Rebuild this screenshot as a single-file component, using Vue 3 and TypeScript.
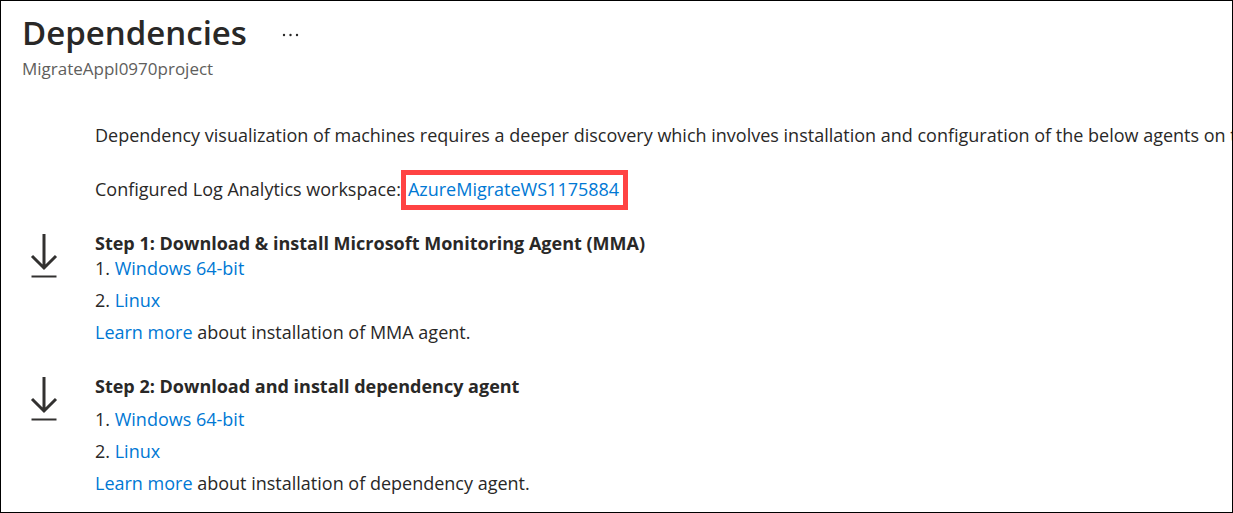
<script setup lang="ts">
interface Step {
  id: string
  title: string
  compact: boolean
  downloads: string[]
  about: string
}

const steps: Step[] = [
  {
    id: 'mma',
    title: 'Step 1: Download & install Microsoft Monitoring Agent (MMA)',
    compact: true,
    downloads: ['Windows 64-bit', 'Linux'],
    about: 'about installation of MMA agent.',
  },
  {
    id: 'dependency',
    title: 'Step 2: Download and install dependency agent',
    compact: false,
    downloads: ['Windows 64-bit', 'Linux'],
    about: 'about installation of dependency agent.',
  },
]
</script>

<template>
  <div class="blade">
    <header class="header">
      <div class="title-row">
        <h1>Dependencies</h1>
        <button class="more" type="button" aria-label="More actions">
          <svg width="18" height="4" viewBox="0 0 18 4" aria-hidden="true">
            <circle cx="2" cy="2" r="1.2" />
            <circle cx="8.5" cy="2" r="1.2" />
            <circle cx="15" cy="2" r="1.2" />
          </svg>
        </button>
      </div>
      <p class="subtitle">MigrateAppl0970project</p>
    </header>

    <main>
      <p class="intro">
        Dependency visualization of machines requires a deeper discovery which involves installation and configuration of the below agents on the
      </p>
      <p class="workspace">
        <span>Configured Log Analytics workspace:</span>
        <a class="highlight" href="#workspace">AzureMigrateWS1175884</a>
      </p>

      <section v-for="step in steps" :key="step.id" class="step">
        <svg class="download" width="28" height="44" viewBox="0 0 28 44" aria-hidden="true">
          <path d="M14 0V34M2 22L14 34L26 22" />
          <path d="M1.5 42.5H26.5" class="base" />
        </svg>
        <div class="step-body" :class="{ compact: step.compact }">
          <h2>{{ step.title }}</h2>
          <ol>
            <li v-for="item in step.downloads" :key="item">
              <a :href="'#' + step.id">{{ item }}</a>
            </li>
          </ol>
          <p><a :href="'#' + step.id + '-docs'">Learn more</a> {{ step.about }}</p>
        </div>
      </section>
    </main>
  </div>
</template>

<style>
body {
  margin: 0;
}
</style>

<style scoped>
.blade {
  box-sizing: border-box;
  min-height: 100vh;
  padding: 8px 0 16px 21px;
  border: 1px solid #000;
  overflow: hidden;
  background: #fff;
  color: #292827;
  font-family: "Segoe UI", "Open Sans", "Noto Sans", sans-serif;
  font-size: 18px;
  line-height: 24px;
}

h1,
h2,
p,
ol {
  margin: 0;
  padding: 0;
}

.title-row {
  display: flex;
  align-items: center;
  gap: 35px;
}

h1 {
  font-size: 33px;
  line-height: 48px;
  font-weight: 600;
}

.more {
  display: flex;
  padding: 4px 0 0;
  border: 0;
  background: none;
}

.more svg {
  fill: #292827;
}

.subtitle {
  color: #605e5c;
  font-size: 17px;
}

main {
  padding: 42px 0 0 1px;
}

.intro,
.workspace {
  margin-left: 72px;
  white-space: nowrap;
}

.workspace {
  display: flex;
  align-items: baseline;
  margin-top: 23px;
}

a {
  color: #0078d4;
  text-decoration: none;
}

.highlight {
  padding: 2px 4px 4px 2px;
  border: 5px solid #ff4343;
}

.step {
  display: flex;
  gap: 37px;
  margin-top: 20px;
  padding-left: 7px;
}

.step + .step {
  margin-top: 29px;
}

.download {
  flex: none;
  margin-top: 4px;
  fill: none;
  stroke: #323130;
  stroke-width: 3;
}

.base {
  stroke-width: 2;
}

h2 {
  font-size: 18px;
  line-height: 26px;
  font-weight: 700;
}

.step-body {
  display: flex;
  flex-direction: column;
  gap: 8px;
}

.compact h2 {
  margin-bottom: -8px;
}

ol {
  display: flex;
  flex-direction: column;
  gap: 8px;
  list-style-position: inside;
}
</style>
